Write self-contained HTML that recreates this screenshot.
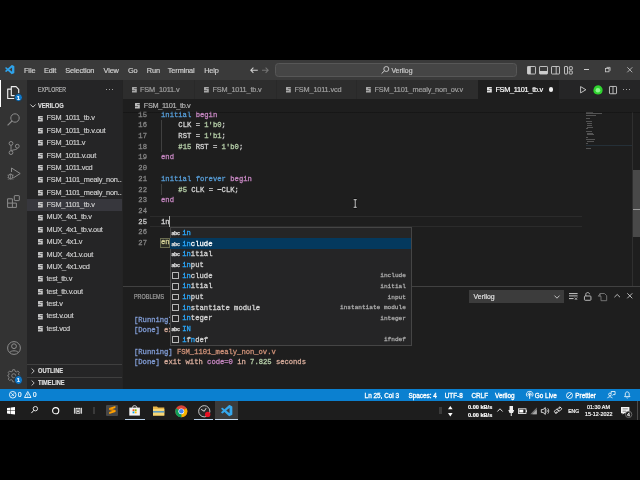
<!DOCTYPE html>
<html><head><meta charset="utf-8">
<style>
*{margin:0;padding:0;box-sizing:border-box}
html,body{width:640px;height:480px;background:#000;overflow:hidden}
body{position:relative;font-family:"Liberation Sans",sans-serif;color:#ccc}
#root{position:absolute;left:0;top:0;width:640px;height:480px;will-change:transform}
.a{position:absolute}
.t{position:absolute;white-space:pre;-webkit-text-stroke-width:0.18px}
svg{position:absolute;overflow:visible}
div[style*="Liberation Mono"]{-webkit-text-stroke-width:0.28px}
</style></head><body><div id="root">

<div class="a" style="left:0.00px;top:60.00px;width:640.00px;height:19.70px;background:#3a3a3a;"></div>
<div class="a" style="left:0.00px;top:79.70px;width:27.00px;height:309.05px;background:#333333;"></div>
<div class="a" style="left:27.00px;top:79.70px;width:95.50px;height:309.05px;background:#252526;"></div>
<div class="a" style="left:122.50px;top:79.70px;width:517.50px;height:309.05px;background:#1e1e1e;"></div>
<div class="a" style="left:122.50px;top:79.70px;width:517.50px;height:19.70px;background:#252526;"></div>
<div class="a" style="left:0.00px;top:388.75px;width:640.00px;height:12.45px;background:#0b80d0;"></div>
<div class="a" style="left:0.00px;top:401.20px;width:640.00px;height:18.80px;background:#1d1d1d;"></div>
<svg style="left:5.1px;top:64.8px" width="9.5" height="9.2" viewBox="0 0 100 100"><path d="M96.5 10.8 L75.9 0.9 A6.2 6.2 0 0 0 68.8 2.1 L29.4 38 L12.2 25 A4.2 4.2 0 0 0 6.9 25.2 L1.4 30.2 A4.2 4.2 0 0 0 1.4 36.4 L16.3 50 L1.4 63.6 A4.2 4.2 0 0 0 1.4 69.8 L6.9 74.8 A4.2 4.2 0 0 0 12.2 75 L29.4 62 L68.8 97.9 A6.2 6.2 0 0 0 75.9 99.1 L96.5 89.2 A6.2 6.2 0 0 0 100 83.6 V16.4 A6.2 6.2 0 0 0 96.5 10.8 Z M75 72.7 L45.1 50 L75 27.3 Z" fill="#2fa3ea" fill-rule="evenodd"/></svg>
<div class="t" style="left:24.00px;top:65.60px;font-size:7.35px;line-height:10px;color:#d0d0d0;font-weight:normal;letter-spacing:-0.12px;font-family:'Liberation Sans';">File</div>
<div class="t" style="left:44.10px;top:65.60px;font-size:7.35px;line-height:10px;color:#d0d0d0;font-weight:normal;letter-spacing:-0.12px;font-family:'Liberation Sans';">Edit</div>
<div class="t" style="left:65.20px;top:65.60px;font-size:7.35px;line-height:10px;color:#d0d0d0;font-weight:normal;letter-spacing:-0.12px;font-family:'Liberation Sans';">Selection</div>
<div class="t" style="left:103.50px;top:65.60px;font-size:7.35px;line-height:10px;color:#d0d0d0;font-weight:normal;letter-spacing:-0.12px;font-family:'Liberation Sans';">View</div>
<div class="t" style="left:128.00px;top:65.60px;font-size:7.35px;line-height:10px;color:#d0d0d0;font-weight:normal;letter-spacing:-0.12px;font-family:'Liberation Sans';">Go</div>
<div class="t" style="left:146.80px;top:65.60px;font-size:7.35px;line-height:10px;color:#d0d0d0;font-weight:normal;letter-spacing:-0.12px;font-family:'Liberation Sans';">Run</div>
<div class="t" style="left:167.80px;top:65.60px;font-size:7.35px;line-height:10px;color:#d0d0d0;font-weight:normal;letter-spacing:-0.12px;font-family:'Liberation Sans';">Terminal</div>
<div class="t" style="left:204.20px;top:65.60px;font-size:7.35px;line-height:10px;color:#d0d0d0;font-weight:normal;letter-spacing:-0.12px;font-family:'Liberation Sans';">Help</div>
<svg style="left:249.5px;top:66.8px" width="8" height="6.4" viewBox="0 0 8 6.4"><path d="M7.8 3.2 H0.9 M3.4 0.6 L0.8 3.2 L3.4 5.8" stroke="#d0d0d0" stroke-width="1.05" fill="none"/></svg>
<svg style="left:262.2px;top:66.8px" width="7" height="6.4" viewBox="0 0 7 6.4"><path d="M0 3.2 H6.1 M3.6 0.6 L6.2 3.2 L3.6 5.8" stroke="#737373" stroke-width="1.05" fill="none"/></svg>
<div class="a" style="left:274.80px;top:62.80px;width:242.40px;height:13.90px;background:#454545;border:0.7px solid #575757;border-radius:3.5px"></div>
<svg style="left:381px;top:65.6px" width="8.5" height="8" viewBox="0 0 8.5 8"><circle cx="5.3" cy="3" r="2.5" stroke="#cfcfcf" stroke-width="0.9" fill="none"/><path d="M3.5 4.8 L0.6 7.6" stroke="#cfcfcf" stroke-width="1"/></svg>
<div class="t" style="left:391.40px;top:65.60px;font-size:6.9px;line-height:10px;color:#cccccc;font-weight:normal;letter-spacing:0px;font-family:'Liberation Sans';">Verilog</div>
<svg style="left:526.6px;top:65.6px" width="9" height="8.5" viewBox="0 0 9 8.5"><rect x="0.5" y="0.5" width="8" height="7.5" rx="0.6" stroke="#cccccc" stroke-width="0.9" fill="none"/><rect x="0.5" y="0.5" width="3.3" height="7.5" fill="#cccccc"/></svg>
<svg style="left:538.8px;top:65.6px" width="9" height="8.5" viewBox="0 0 9 8.5"><rect x="0.5" y="0.5" width="8" height="7.5" rx="0.6" stroke="#cccccc" stroke-width="0.9" fill="none"/><rect x="0.5" y="5" width="8" height="3" fill="#cccccc"/></svg>
<svg style="left:551px;top:65.6px" width="9" height="8.5" viewBox="0 0 9 8.5"><rect x="0.5" y="0.5" width="8" height="7.5" rx="0.6" stroke="#cccccc" stroke-width="0.9" fill="none"/><path d="M5.2 0.5 V8" stroke="#cccccc" stroke-width="0.9"/></svg>
<svg style="left:564px;top:65.6px" width="9" height="8.5" viewBox="0 0 9 8.5"><rect x="0.5" y="0.5" width="3" height="7.5" rx="0.4" stroke="#cccccc" stroke-width="0.9" fill="none"/><rect x="5.3" y="0.7" width="3" height="3" rx="0.4" stroke="#cccccc" stroke-width="0.9" fill="none"/><rect x="5.3" y="5" width="3" height="3" rx="0.4" stroke="#cccccc" stroke-width="0.9" fill="none"/></svg>
<div class="a" style="left:583.80px;top:69.30px;width:5.30px;height:0.80px;background:#cccccc;"></div>
<svg style="left:604.6px;top:66.8px" width="5.5" height="5.2" viewBox="0 0 5.5 5.2"><rect x="0.4" y="1.4" width="3.6" height="3.4" stroke="#cccccc" stroke-width="0.8" fill="none"/><path d="M1.5 0.4 H5.1 V3.8" stroke="#cccccc" stroke-width="0.8" fill="none"/></svg>
<svg style="left:627px;top:66.6px" width="5.6" height="5.6" viewBox="0 0 5.6 5.6"><path d="M0.3 0.3 L5.3 5.3 M5.3 0.3 L0.3 5.3" stroke="#cccccc" stroke-width="0.8"/></svg>
<div class="a" style="left:0.00px;top:79.70px;width:1.40px;height:27.30px;background:#ffffff;"></div>
<svg style="left:7px;top:86.2px" width="12.5" height="13.2" viewBox="0 0 12.5 13.2"><path d="M4.3 0.7 H9.1 L11.7 3.3 V9.6 H4.3 Z" stroke="#ededed" stroke-width="1.15" fill="none" stroke-linejoin="round"/><path d="M4.3 3.1 H0.7 V12.5 H8.3 V9.6" stroke="#ededed" stroke-width="1.15" fill="none" stroke-linejoin="round"/></svg>
<div class="a" style="left:13.7px;top:92.9px;width:9.4px;height:9.4px;border-radius:50%;background:#0f77c8;border:0.8px solid #2c2c2c"></div>
<div class="t" style="left:16.75px;top:92.70px;font-size:6.0px;line-height:10px;color:#e8f4ff;font-weight:bold;letter-spacing:0px;font-family:'Liberation Sans';">1</div>
<svg style="left:7.2px;top:113.2px" width="13" height="13" viewBox="0 0 13 13"><circle cx="8" cy="5" r="4.2" stroke="#8c8c8c" stroke-width="1" fill="none"/><path d="M5 8 L0.6 12.4" stroke="#8c8c8c" stroke-width="1.1"/></svg>
<svg style="left:7.5px;top:140.5px" width="12" height="14" viewBox="0 0 12 14"><circle cx="3" cy="2.4" r="1.9" stroke="#8c8c8c" stroke-width="0.95" fill="none"/><circle cx="3" cy="11.6" r="1.9" stroke="#8c8c8c" stroke-width="0.95" fill="none"/><circle cx="9.3" cy="5.2" r="1.9" stroke="#8c8c8c" stroke-width="0.95" fill="none"/><path d="M3 4.3 V9.7 M9.3 7.1 C9.3 9 5 8.5 3.3 9.8" stroke="#8c8c8c" stroke-width="0.95" fill="none"/></svg>
<svg style="left:6.8px;top:167px" width="14" height="14" viewBox="0 0 14 14"><path d="M4.5 1 L13.2 6.5 L6.5 10.8" stroke="#8c8c8c" stroke-width="1" fill="none" stroke-linejoin="round"/><path d="M4.5 1 V5" stroke="#8c8c8c" stroke-width="1"/><ellipse cx="3.6" cy="9.6" rx="2.1" ry="2.6" stroke="#8c8c8c" stroke-width="0.95" fill="none"/><path d="M0.5 8.2 H1.5 M5.7 8.2 H6.7 M0.5 10.6 H1.5 M5.7 10.6 H6.7 M1.2 12.6 L1.9 11.8 M6 12.6 L5.3 11.8 M3.6 7 V12" stroke="#8c8c8c" stroke-width="0.8"/></svg>
<svg style="left:7px;top:194.5px" width="13" height="13" viewBox="0 0 13 13"><path d="M0.6 3.8 H5.4 V8.1 H9.4 V12.4 H0.6 Z M0.6 8.1 H5.4 V12.4" stroke="#8c8c8c" stroke-width="1" fill="none"/><rect x="7.3" y="0.6" width="5" height="5" rx="0.5" stroke="#8c8c8c" stroke-width="1" fill="none"/></svg>
<svg style="left:6.9px;top:341px" width="14" height="14" viewBox="0 0 14 14"><circle cx="7" cy="7" r="6.4" stroke="#8c8c8c" stroke-width="1" fill="none"/><circle cx="7" cy="5.2" r="2.4" stroke="#8c8c8c" stroke-width="1" fill="none"/><path d="M2.8 11.6 C3.5 9.2 10.5 9.2 11.2 11.6" stroke="#8c8c8c" stroke-width="1" fill="none"/></svg>
<svg style="left:6.9px;top:368.7px" width="13.5" height="13.5" viewBox="0 0 14 14"><path d="M6 0.7 H8 L8.4 2.4 L9.8 3 L11.3 2.1 L12.7 3.5 L11.8 5 L12.4 6.4 L13.3 6.8 V7.2 L12.4 7.6 L11.8 9 L12.7 10.5 L11.3 11.9 L9.8 11 L8.4 11.6 L8 13.3 H6 L5.6 11.6 L4.2 11 L2.7 11.9 L1.3 10.5 L2.2 9 L1.6 7.6 L0.7 7.2 V6.8 L1.6 6.4 L2.2 5 L1.3 3.5 L2.7 2.1 L4.2 3 L5.6 2.4 Z" stroke="#8c8c8c" stroke-width="0.9" fill="none" stroke-linejoin="round"/><circle cx="7" cy="7" r="2.1" stroke="#8c8c8c" stroke-width="0.9" fill="none"/></svg>
<div class="a" style="left:13.7px;top:375.3px;width:9.4px;height:9.4px;border-radius:50%;background:#0f77c8;border:0.8px solid #2c2c2c"></div>
<div class="t" style="left:16.75px;top:375.10px;font-size:6.0px;line-height:10px;color:#e8f4ff;font-weight:bold;letter-spacing:0px;font-family:'Liberation Sans';">1</div>
<div class="t" style="left:37.90px;top:84.60px;font-size:6.6px;line-height:10px;color:#bbbbbb;font-weight:normal;transform:scaleX(0.78);transform-origin:0 50%;">EXPLORER</div>
<div class="a" style="left:106.00px;top:89.00px;width:1.30px;height:1.30px;background:#cccccc;border-radius:50%"></div>
<div class="a" style="left:108.90px;top:89.00px;width:1.30px;height:1.30px;background:#cccccc;border-radius:50%"></div>
<div class="a" style="left:111.80px;top:89.00px;width:1.30px;height:1.30px;background:#cccccc;border-radius:50%"></div>
<svg style="left:29.6px;top:103.9px" width="6" height="3.6" viewBox="0 0 6 3.6"><path d="M0.4 0.5 L3 3.1 L5.6 0.5" stroke="#c8c8c8" stroke-width="1" fill="none"/></svg>
<div class="t" style="left:37.90px;top:100.60px;font-size:6.8px;line-height:10px;color:#dedede;font-weight:bold;transform:scaleX(0.84);transform-origin:0 50%;">VERILOG</div>
<svg style="left:38.30px;top:115.50px" width="5" height="5.6" viewBox="0 0 5 5.6"><path d="M0.3 0 H4.8 V1.5 H1.9 V2.1 H4.8 V5.6 H0 V4.1 H3.1 V3.5 H0 V0.4 Z" fill="#c5c5c5"/></svg>
<div class="t" style="left:46.50px;top:113.40px;font-size:7.35px;line-height:10px;color:#cccccc;font-weight:normal;letter-spacing:-0.24px;font-family:'Liberation Sans';">FSM_1011_tb.v</div>
<svg style="left:38.30px;top:127.88px" width="5" height="5.6" viewBox="0 0 5 5.6"><path d="M0.3 0 H4.8 V1.5 H1.9 V2.1 H4.8 V5.6 H0 V4.1 H3.1 V3.5 H0 V0.4 Z" fill="#c5c5c5"/></svg>
<div class="t" style="left:46.50px;top:125.78px;font-size:7.35px;line-height:10px;color:#cccccc;font-weight:normal;letter-spacing:-0.24px;font-family:'Liberation Sans';">FSM_1011_tb.v.out</div>
<svg style="left:38.30px;top:140.25px" width="5" height="5.6" viewBox="0 0 5 5.6"><path d="M0.3 0 H4.8 V1.5 H1.9 V2.1 H4.8 V5.6 H0 V4.1 H3.1 V3.5 H0 V0.4 Z" fill="#c5c5c5"/></svg>
<div class="t" style="left:46.50px;top:138.15px;font-size:7.35px;line-height:10px;color:#cccccc;font-weight:normal;letter-spacing:-0.24px;font-family:'Liberation Sans';">FSM_1011.v</div>
<svg style="left:38.30px;top:152.62px" width="5" height="5.6" viewBox="0 0 5 5.6"><path d="M0.3 0 H4.8 V1.5 H1.9 V2.1 H4.8 V5.6 H0 V4.1 H3.1 V3.5 H0 V0.4 Z" fill="#c5c5c5"/></svg>
<div class="t" style="left:46.50px;top:150.53px;font-size:7.35px;line-height:10px;color:#cccccc;font-weight:normal;letter-spacing:-0.24px;font-family:'Liberation Sans';">FSM_1011.v.out</div>
<svg style="left:38.30px;top:165.00px" width="5" height="5.6" viewBox="0 0 5 5.6"><path d="M0.3 0 H4.8 V1.5 H1.9 V2.1 H4.8 V5.6 H0 V4.1 H3.1 V3.5 H0 V0.4 Z" fill="#c5c5c5"/></svg>
<div class="t" style="left:46.50px;top:162.90px;font-size:7.35px;line-height:10px;color:#cccccc;font-weight:normal;letter-spacing:-0.24px;font-family:'Liberation Sans';">FSM_1011.vcd</div>
<svg style="left:38.30px;top:177.38px" width="5" height="5.6" viewBox="0 0 5 5.6"><path d="M0.3 0 H4.8 V1.5 H1.9 V2.1 H4.8 V5.6 H0 V4.1 H3.1 V3.5 H0 V0.4 Z" fill="#c5c5c5"/></svg>
<div class="t" style="left:46.50px;top:175.28px;font-size:7.35px;line-height:10px;color:#cccccc;font-weight:normal;letter-spacing:-0.24px;font-family:'Liberation Sans';">FSM_1101_mealy_non...</div>
<svg style="left:38.30px;top:189.75px" width="5" height="5.6" viewBox="0 0 5 5.6"><path d="M0.3 0 H4.8 V1.5 H1.9 V2.1 H4.8 V5.6 H0 V4.1 H3.1 V3.5 H0 V0.4 Z" fill="#c5c5c5"/></svg>
<div class="t" style="left:46.50px;top:187.65px;font-size:7.35px;line-height:10px;color:#cccccc;font-weight:normal;letter-spacing:-0.24px;font-family:'Liberation Sans';">FSM_1101_mealy_non...</div>
<div class="a" style="left:27.00px;top:198.53px;width:95.50px;height:12.40px;background:#37373d;"></div>
<svg style="left:38.30px;top:202.12px" width="5" height="5.6" viewBox="0 0 5 5.6"><path d="M0.3 0 H4.8 V1.5 H1.9 V2.1 H4.8 V5.6 H0 V4.1 H3.1 V3.5 H0 V0.4 Z" fill="#c5c5c5"/></svg>
<div class="t" style="left:46.50px;top:200.03px;font-size:7.35px;line-height:10px;color:#cccccc;font-weight:normal;letter-spacing:-0.24px;font-family:'Liberation Sans';">FSM_1101_tb.v</div>
<svg style="left:38.30px;top:214.50px" width="5" height="5.6" viewBox="0 0 5 5.6"><path d="M0.3 0 H4.8 V1.5 H1.9 V2.1 H4.8 V5.6 H0 V4.1 H3.1 V3.5 H0 V0.4 Z" fill="#c5c5c5"/></svg>
<div class="t" style="left:46.50px;top:212.40px;font-size:7.35px;line-height:10px;color:#cccccc;font-weight:normal;letter-spacing:-0.24px;font-family:'Liberation Sans';">MUX_4x1_tb.v</div>
<svg style="left:38.30px;top:226.88px" width="5" height="5.6" viewBox="0 0 5 5.6"><path d="M0.3 0 H4.8 V1.5 H1.9 V2.1 H4.8 V5.6 H0 V4.1 H3.1 V3.5 H0 V0.4 Z" fill="#c5c5c5"/></svg>
<div class="t" style="left:46.50px;top:224.78px;font-size:7.35px;line-height:10px;color:#cccccc;font-weight:normal;letter-spacing:-0.24px;font-family:'Liberation Sans';">MUX_4x1_tb.v.out</div>
<svg style="left:38.30px;top:239.25px" width="5" height="5.6" viewBox="0 0 5 5.6"><path d="M0.3 0 H4.8 V1.5 H1.9 V2.1 H4.8 V5.6 H0 V4.1 H3.1 V3.5 H0 V0.4 Z" fill="#c5c5c5"/></svg>
<div class="t" style="left:46.50px;top:237.15px;font-size:7.35px;line-height:10px;color:#cccccc;font-weight:normal;letter-spacing:-0.24px;font-family:'Liberation Sans';">MUX_4x1.v</div>
<svg style="left:38.30px;top:251.62px" width="5" height="5.6" viewBox="0 0 5 5.6"><path d="M0.3 0 H4.8 V1.5 H1.9 V2.1 H4.8 V5.6 H0 V4.1 H3.1 V3.5 H0 V0.4 Z" fill="#c5c5c5"/></svg>
<div class="t" style="left:46.50px;top:249.53px;font-size:7.35px;line-height:10px;color:#cccccc;font-weight:normal;letter-spacing:-0.24px;font-family:'Liberation Sans';">MUX_4x1.v.out</div>
<svg style="left:38.30px;top:264.00px" width="5" height="5.6" viewBox="0 0 5 5.6"><path d="M0.3 0 H4.8 V1.5 H1.9 V2.1 H4.8 V5.6 H0 V4.1 H3.1 V3.5 H0 V0.4 Z" fill="#c5c5c5"/></svg>
<div class="t" style="left:46.50px;top:261.90px;font-size:7.35px;line-height:10px;color:#cccccc;font-weight:normal;letter-spacing:-0.24px;font-family:'Liberation Sans';">MUX_4x1.vcd</div>
<svg style="left:38.30px;top:276.38px" width="5" height="5.6" viewBox="0 0 5 5.6"><path d="M0.3 0 H4.8 V1.5 H1.9 V2.1 H4.8 V5.6 H0 V4.1 H3.1 V3.5 H0 V0.4 Z" fill="#c5c5c5"/></svg>
<div class="t" style="left:46.50px;top:274.28px;font-size:7.35px;line-height:10px;color:#cccccc;font-weight:normal;letter-spacing:-0.24px;font-family:'Liberation Sans';">test_tb.v</div>
<svg style="left:38.30px;top:288.75px" width="5" height="5.6" viewBox="0 0 5 5.6"><path d="M0.3 0 H4.8 V1.5 H1.9 V2.1 H4.8 V5.6 H0 V4.1 H3.1 V3.5 H0 V0.4 Z" fill="#c5c5c5"/></svg>
<div class="t" style="left:46.50px;top:286.65px;font-size:7.35px;line-height:10px;color:#cccccc;font-weight:normal;letter-spacing:-0.24px;font-family:'Liberation Sans';">test_tb.v.out</div>
<svg style="left:38.30px;top:301.12px" width="5" height="5.6" viewBox="0 0 5 5.6"><path d="M0.3 0 H4.8 V1.5 H1.9 V2.1 H4.8 V5.6 H0 V4.1 H3.1 V3.5 H0 V0.4 Z" fill="#c5c5c5"/></svg>
<div class="t" style="left:46.50px;top:299.03px;font-size:7.35px;line-height:10px;color:#cccccc;font-weight:normal;letter-spacing:-0.24px;font-family:'Liberation Sans';">test.v</div>
<svg style="left:38.30px;top:313.50px" width="5" height="5.6" viewBox="0 0 5 5.6"><path d="M0.3 0 H4.8 V1.5 H1.9 V2.1 H4.8 V5.6 H0 V4.1 H3.1 V3.5 H0 V0.4 Z" fill="#c5c5c5"/></svg>
<div class="t" style="left:46.50px;top:311.40px;font-size:7.35px;line-height:10px;color:#cccccc;font-weight:normal;letter-spacing:-0.24px;font-family:'Liberation Sans';">test.v.out</div>
<svg style="left:38.30px;top:325.88px" width="5" height="5.6" viewBox="0 0 5 5.6"><path d="M0.3 0 H4.8 V1.5 H1.9 V2.1 H4.8 V5.6 H0 V4.1 H3.1 V3.5 H0 V0.4 Z" fill="#c5c5c5"/></svg>
<div class="t" style="left:46.50px;top:323.78px;font-size:7.35px;line-height:10px;color:#cccccc;font-weight:normal;letter-spacing:-0.24px;font-family:'Liberation Sans';">test.vcd</div>
<div class="a" style="left:27.00px;top:364.30px;width:95.50px;height:0.70px;background:#3f3f3f;"></div>
<div class="a" style="left:27.00px;top:377.00px;width:95.50px;height:0.70px;background:#3f3f3f;"></div>
<svg style="left:30.5px;top:368.00px" width="4" height="6" viewBox="0 0 4 6"><path d="M0.6 0.5 L3.2 3 L0.6 5.5" stroke="#cccccc" stroke-width="0.9" fill="none"/></svg>
<div class="t" style="left:37.90px;top:365.80px;font-size:6.8px;line-height:10px;color:#dedede;font-weight:bold;transform:scaleX(0.84);transform-origin:0 50%;">OUTLINE</div>
<svg style="left:30.5px;top:380.20px" width="4" height="6" viewBox="0 0 4 6"><path d="M0.6 0.5 L3.2 3 L0.6 5.5" stroke="#cccccc" stroke-width="0.9" fill="none"/></svg>
<div class="t" style="left:37.90px;top:378.00px;font-size:6.8px;line-height:10px;color:#dedede;font-weight:bold;transform:scaleX(0.84);transform-origin:0 50%;">TIMELINE</div>
<div class="a" style="left:122.20px;top:79.70px;width:0.60px;height:309.05px;background:#242424;"></div>
<div class="a" style="left:122.50px;top:79.70px;width:72.00px;height:19.70px;background:#2d2d2d;"></div>
<svg style="left:131.80px;top:86.60px" width="5" height="5.6" viewBox="0 0 5 5.6"><path d="M0.3 0 H4.8 V1.5 H1.9 V2.1 H4.8 V5.6 H0 V4.1 H3.1 V3.5 H0 V0.4 Z" fill="#a8a8a8"/></svg>
<div class="t" style="left:140.00px;top:84.90px;font-size:7.35px;line-height:10px;color:#a0a0a0;font-weight:normal;letter-spacing:-0.17px;font-family:'Liberation Sans';">FSM_1011.v</div>
<div class="a" style="left:195.00px;top:79.70px;width:81.50px;height:19.70px;background:#2d2d2d;"></div>
<svg style="left:204.30px;top:86.60px" width="5" height="5.6" viewBox="0 0 5 5.6"><path d="M0.3 0 H4.8 V1.5 H1.9 V2.1 H4.8 V5.6 H0 V4.1 H3.1 V3.5 H0 V0.4 Z" fill="#a8a8a8"/></svg>
<div class="t" style="left:212.50px;top:84.90px;font-size:7.35px;line-height:10px;color:#a0a0a0;font-weight:normal;letter-spacing:-0.17px;font-family:'Liberation Sans';">FSM_1011_tb.v</div>
<div class="a" style="left:277.00px;top:79.70px;width:79.50px;height:19.70px;background:#2d2d2d;"></div>
<svg style="left:286.30px;top:86.60px" width="5" height="5.6" viewBox="0 0 5 5.6"><path d="M0.3 0 H4.8 V1.5 H1.9 V2.1 H4.8 V5.6 H0 V4.1 H3.1 V3.5 H0 V0.4 Z" fill="#a8a8a8"/></svg>
<div class="t" style="left:294.50px;top:84.90px;font-size:7.35px;line-height:10px;color:#a0a0a0;font-weight:normal;letter-spacing:-0.17px;font-family:'Liberation Sans';">FSM_1011.vcd</div>
<div class="a" style="left:357.00px;top:79.70px;width:121.50px;height:19.70px;background:#2d2d2d;"></div>
<svg style="left:366.30px;top:86.60px" width="5" height="5.6" viewBox="0 0 5 5.6"><path d="M0.3 0 H4.8 V1.5 H1.9 V2.1 H4.8 V5.6 H0 V4.1 H3.1 V3.5 H0 V0.4 Z" fill="#a8a8a8"/></svg>
<div class="t" style="left:374.50px;top:84.90px;font-size:7.35px;line-height:10px;color:#a0a0a0;font-weight:normal;letter-spacing:-0.17px;font-family:'Liberation Sans';">FSM_1101_mealy_non_ov.v</div>
<div class="a" style="left:478.00px;top:79.70px;width:80.80px;height:19.90px;background:#1e1e1e;"></div>
<div class="a" style="left:194.40px;top:79.70px;width:0.60px;height:19.70px;background:#292929;"></div>
<div class="a" style="left:276.40px;top:79.70px;width:0.60px;height:19.70px;background:#292929;"></div>
<div class="a" style="left:356.40px;top:79.70px;width:0.60px;height:19.70px;background:#292929;"></div>
<svg style="left:486.90px;top:86.60px" width="5" height="5.6" viewBox="0 0 5 5.6"><path d="M0.3 0 H4.8 V1.5 H1.9 V2.1 H4.8 V5.6 H0 V4.1 H3.1 V3.5 H0 V0.4 Z" fill="#e0e0e0"/></svg>
<div class="t" style="left:495.40px;top:84.70px;font-size:7.35px;line-height:10px;color:#ffffff;font-weight:normal;letter-spacing:-0.3px;font-family:'Liberation Sans';">FSM_1101_tb.v</div>
<div class="a" style="left:548.6px;top:87.0px;width:4.9px;height:4.9px;border-radius:50%;background:#eeeeee"></div>
<svg style="left:580px;top:86px" width="6.5" height="7.5" viewBox="0 0 6.5 7.5"><path d="M0.6 0.6 L5.9 3.75 L0.6 6.9 Z" stroke="#cccccc" stroke-width="0.9" fill="none" stroke-linejoin="round"/></svg>
<svg style="left:592.8px;top:84.8px" width="10" height="9.8" viewBox="0 0 10 9.8"><path d="M5.3 0.2 C7 0.2 8.2 1.2 9.3 3.2 C10 5 9.6 7.4 8 8.8 C6.6 9.8 3.6 9.9 2 8.8 C0.4 7.6 0 5.4 0.8 3.4 C1.6 1.4 3.4 0.2 5.3 0.2 Z" fill="#2fd32f"/><circle cx="4.9" cy="5.2" r="2.3" fill="#8ef58e"/></svg>
<svg style="left:608.7px;top:85.6px" width="8" height="8.2" viewBox="0 0 8 8.2"><rect x="0.45" y="0.45" width="7.1" height="7.3" rx="0.6" stroke="#cccccc" stroke-width="0.9" fill="none"/><path d="M4 0.45 V7.7" stroke="#cccccc" stroke-width="0.9"/></svg>
<div class="a" style="left:623.00px;top:89.20px;width:1.30px;height:1.30px;background:#cccccc;border-radius:50%"></div>
<div class="a" style="left:625.90px;top:89.20px;width:1.30px;height:1.30px;background:#cccccc;border-radius:50%"></div>
<div class="a" style="left:628.80px;top:89.20px;width:1.30px;height:1.30px;background:#cccccc;border-radius:50%"></div>
<svg style="left:135.40px;top:103.00px" width="5" height="5.6" viewBox="0 0 5 5.6"><path d="M0.3 0 H4.8 V1.5 H1.9 V2.1 H4.8 V5.6 H0 V4.1 H3.1 V3.5 H0 V0.4 Z" fill="#bdbdbd"/></svg>
<div class="t" style="left:143.80px;top:101.10px;font-size:7.35px;line-height:10px;color:#b4b4b4;font-weight:normal;letter-spacing:-0.36px;font-family:'Liberation Sans';">FSM_1101_tb.v</div>
<div class="a" style="left:122.5px;top:110.4px;width:517.5px;height:175.9px;overflow:hidden">
<div class="a" style="left:27.50px;top:105.60px;width:431.50px;height:10.688px;border-top:0.6px solid #2b2b2b;border-bottom:0.6px solid #2b2b2b"></div>
<div class="t" style="left:-12.50px;width:37.00px;text-align:right;top:-11.36px;height:10.6875px;line-height:10.6875px;font-family:'Liberation Mono';font-size:7.2px;color:#858585">14</div>
<div class="t" style="left:-12.50px;width:37.00px;text-align:right;top:-0.68px;height:10.6875px;line-height:10.6875px;font-family:'Liberation Mono';font-size:7.2px;color:#858585">15</div>
<div class="t" style="left:38.50px;top:-0.68px;line-height:10.6875px;font-family:'Liberation Mono';font-size:7.2px;color:#569cd6;letter-spacing:0.010px">initial</div>
<div class="t" style="left:73.14px;top:-0.68px;line-height:10.6875px;font-family:'Liberation Mono';font-size:7.2px;color:#c586c0;letter-spacing:0.010px">begin</div>
<div class="t" style="left:-12.50px;width:37.00px;text-align:right;top:10.01px;height:10.6875px;line-height:10.6875px;font-family:'Liberation Mono';font-size:7.2px;color:#858585">16</div>
<div class="t" style="left:55.82px;top:10.01px;line-height:10.6875px;font-family:'Liberation Mono';font-size:7.2px;color:#d4d4d4;letter-spacing:0.010px">CLK</div>
<div class="t" style="left:73.14px;top:10.01px;line-height:10.6875px;font-family:'Liberation Mono';font-size:7.2px;color:#d4d4d4;letter-spacing:0.010px">=</div>
<div class="t" style="left:81.80px;top:10.01px;line-height:10.6875px;font-family:'Liberation Mono';font-size:7.2px;color:#b5cea8;letter-spacing:0.010px">1'b0</div>
<div class="t" style="left:99.12px;top:10.01px;line-height:10.6875px;font-family:'Liberation Mono';font-size:7.2px;color:#d4d4d4;letter-spacing:0.010px">;</div>
<div class="t" style="left:-12.50px;width:37.00px;text-align:right;top:20.70px;height:10.6875px;line-height:10.6875px;font-family:'Liberation Mono';font-size:7.2px;color:#858585">17</div>
<div class="t" style="left:55.82px;top:20.70px;line-height:10.6875px;font-family:'Liberation Mono';font-size:7.2px;color:#d4d4d4;letter-spacing:0.010px">RST</div>
<div class="t" style="left:73.14px;top:20.70px;line-height:10.6875px;font-family:'Liberation Mono';font-size:7.2px;color:#d4d4d4;letter-spacing:0.010px">=</div>
<div class="t" style="left:81.80px;top:20.70px;line-height:10.6875px;font-family:'Liberation Mono';font-size:7.2px;color:#b5cea8;letter-spacing:0.010px">1'b1</div>
<div class="t" style="left:99.12px;top:20.70px;line-height:10.6875px;font-family:'Liberation Mono';font-size:7.2px;color:#d4d4d4;letter-spacing:0.010px">;</div>
<div class="t" style="left:-12.50px;width:37.00px;text-align:right;top:31.39px;height:10.6875px;line-height:10.6875px;font-family:'Liberation Mono';font-size:7.2px;color:#858585">18</div>
<div class="t" style="left:55.82px;top:31.39px;line-height:10.6875px;font-family:'Liberation Mono';font-size:7.2px;color:#b5cea8;letter-spacing:0.010px">#15</div>
<div class="t" style="left:73.14px;top:31.39px;line-height:10.6875px;font-family:'Liberation Mono';font-size:7.2px;color:#d4d4d4;letter-spacing:0.010px">RST</div>
<div class="t" style="left:90.46px;top:31.39px;line-height:10.6875px;font-family:'Liberation Mono';font-size:7.2px;color:#d4d4d4;letter-spacing:0.010px">=</div>
<div class="t" style="left:99.12px;top:31.39px;line-height:10.6875px;font-family:'Liberation Mono';font-size:7.2px;color:#b5cea8;letter-spacing:0.010px">1'b0</div>
<div class="t" style="left:116.44px;top:31.39px;line-height:10.6875px;font-family:'Liberation Mono';font-size:7.2px;color:#d4d4d4;letter-spacing:0.010px">;</div>
<div class="t" style="left:-12.50px;width:37.00px;text-align:right;top:42.07px;height:10.6875px;line-height:10.6875px;font-family:'Liberation Mono';font-size:7.2px;color:#858585">19</div>
<div class="t" style="left:38.50px;top:42.07px;line-height:10.6875px;font-family:'Liberation Mono';font-size:7.2px;color:#c586c0;letter-spacing:0.010px">end</div>
<div class="t" style="left:-12.50px;width:37.00px;text-align:right;top:52.76px;height:10.6875px;line-height:10.6875px;font-family:'Liberation Mono';font-size:7.2px;color:#858585">20</div>
<div class="t" style="left:-12.50px;width:37.00px;text-align:right;top:63.45px;height:10.6875px;line-height:10.6875px;font-family:'Liberation Mono';font-size:7.2px;color:#858585">21</div>
<div class="t" style="left:38.50px;top:63.45px;line-height:10.6875px;font-family:'Liberation Mono';font-size:7.2px;color:#569cd6;letter-spacing:0.010px">initial</div>
<div class="t" style="left:73.14px;top:63.45px;line-height:10.6875px;font-family:'Liberation Mono';font-size:7.2px;color:#569cd6;letter-spacing:0.010px">forever</div>
<div class="t" style="left:107.78px;top:63.45px;line-height:10.6875px;font-family:'Liberation Mono';font-size:7.2px;color:#c586c0;letter-spacing:0.010px">begin</div>
<div class="t" style="left:-12.50px;width:37.00px;text-align:right;top:74.14px;height:10.6875px;line-height:10.6875px;font-family:'Liberation Mono';font-size:7.2px;color:#858585">22</div>
<div class="t" style="left:55.82px;top:74.14px;line-height:10.6875px;font-family:'Liberation Mono';font-size:7.2px;color:#b5cea8;letter-spacing:0.010px">#5</div>
<div class="t" style="left:68.81px;top:74.14px;line-height:10.6875px;font-family:'Liberation Mono';font-size:7.2px;color:#d4d4d4;letter-spacing:0.010px">CLK</div>
<div class="t" style="left:86.13px;top:74.14px;line-height:10.6875px;font-family:'Liberation Mono';font-size:7.2px;color:#d4d4d4;letter-spacing:0.010px">=</div>
<div class="t" style="left:94.79px;top:74.14px;line-height:10.6875px;font-family:'Liberation Mono';font-size:7.2px;color:#d4d4d4;letter-spacing:0.010px">~CLK</div>
<div class="t" style="left:112.11px;top:74.14px;line-height:10.6875px;font-family:'Liberation Mono';font-size:7.2px;color:#d4d4d4;letter-spacing:0.010px">;</div>
<div class="t" style="left:-12.50px;width:37.00px;text-align:right;top:84.82px;height:10.6875px;line-height:10.6875px;font-family:'Liberation Mono';font-size:7.2px;color:#858585">23</div>
<div class="t" style="left:38.50px;top:84.82px;line-height:10.6875px;font-family:'Liberation Mono';font-size:7.2px;color:#c586c0;letter-spacing:0.010px">end</div>
<div class="t" style="left:-12.50px;width:37.00px;text-align:right;top:95.51px;height:10.6875px;line-height:10.6875px;font-family:'Liberation Mono';font-size:7.2px;color:#858585">24</div>
<div class="t" style="left:-12.50px;width:37.00px;text-align:right;top:106.20px;height:10.6875px;line-height:10.6875px;font-family:'Liberation Mono';font-size:7.2px;color:#c6c6c6">25</div>
<div class="t" style="left:38.50px;top:106.20px;line-height:10.6875px;font-family:'Liberation Mono';font-size:7.2px;color:#d4d4d4;letter-spacing:0.010px">in</div>
<div class="t" style="left:-12.50px;width:37.00px;text-align:right;top:116.89px;height:10.6875px;line-height:10.6875px;font-family:'Liberation Mono';font-size:7.2px;color:#858585">26</div>
<div class="t" style="left:-12.50px;width:37.00px;text-align:right;top:127.57px;height:10.6875px;line-height:10.6875px;font-family:'Liberation Mono';font-size:7.2px;color:#858585">27</div>
<div class="t" style="left:38.50px;top:127.57px;line-height:10.6875px;font-family:'Liberation Mono';font-size:7.2px;color:#d4d4d4;letter-spacing:0.010px">en</div>
<div class="a" style="left:38.80px;top:9.41px;width:0.7px;height:32.06px;background:#404040"></div>
<div class="a" style="left:38.80px;top:73.54px;width:0.7px;height:10.69px;background:#404040"></div>
<div class="a" style="left:37.70px;top:127.17px;width:10px;height:10.09px;border:0.8px solid #6a6c50;background:#2a2c24"></div>
<div class="t" style="left:38.50px;top:126.97px;line-height:10.6875px;font-family:'Liberation Mono';font-size:7.2px;color:#d7d49a;letter-spacing:0.010px">en</div>
<div class="a" style="left:46.90px;top:105.60px;width:0.9px;height:10.69px;background:#aeafad"></div>
</div>
<div class="a" style="left:585.60px;top:144.50px;width:46.80px;height:1.50px;background:#253038;"></div>
<div class="a" style="left:585.70px;top:111.80px;width:7.80px;height:1.00px;background:rgba(200,200,200,0.32);"></div>
<div class="a" style="left:585.70px;top:112.90px;width:16.20px;height:1.00px;background:rgba(200,200,200,0.32);"></div>
<div class="a" style="left:585.70px;top:115.30px;width:9.90px;height:1.00px;background:rgba(200,200,200,0.32);"></div>
<div class="a" style="left:585.70px;top:117.50px;width:4.20px;height:1.00px;background:rgba(200,200,200,0.32);"></div>
<div class="a" style="left:585.70px;top:121.20px;width:6.30px;height:1.00px;background:rgba(200,200,200,0.32);"></div>
<div class="a" style="left:587.30px;top:123.40px;width:5.20px;height:1.00px;background:rgba(200,200,200,0.32);"></div>
<div class="a" style="left:587.30px;top:125.00px;width:4.70px;height:1.00px;background:rgba(200,200,200,0.32);"></div>
<div class="a" style="left:587.30px;top:126.60px;width:5.90px;height:1.00px;background:rgba(200,200,200,0.32);"></div>
<div class="a" style="left:585.70px;top:128.40px;width:1.90px;height:1.00px;background:rgba(200,200,200,0.32);"></div>
<div class="a" style="left:585.70px;top:131.00px;width:6.30px;height:1.00px;background:rgba(200,200,200,0.32);"></div>
<div class="a" style="left:587.30px;top:132.90px;width:5.70px;height:1.00px;background:rgba(200,200,200,0.32);"></div>
<div class="a" style="left:587.30px;top:134.40px;width:6.70px;height:1.00px;background:rgba(200,200,200,0.32);"></div>
<div class="a" style="left:585.70px;top:137.10px;width:1.90px;height:1.00px;background:rgba(200,200,200,0.32);"></div>
<div class="a" style="left:585.70px;top:139.40px;width:8.90px;height:1.00px;background:rgba(200,200,200,0.32);"></div>
<div class="a" style="left:587.30px;top:141.20px;width:6.70px;height:1.00px;background:rgba(200,200,200,0.32);"></div>
<div class="a" style="left:585.70px;top:142.90px;width:1.90px;height:1.00px;background:rgba(200,200,200,0.32);"></div>
<div class="a" style="left:585.70px;top:147.90px;width:5.20px;height:1.00px;background:rgba(200,200,200,0.32);"></div>
<div class="a" style="left:632.40px;top:111.80px;width:0.70px;height:174.50px;background:#2f2f2f;"></div>
<div class="a" style="left:632.90px;top:170.20px;width:7.10px;height:67.10px;background:#494949;"></div>
<div class="a" style="left:632.90px;top:209.40px;width:7.10px;height:1.10px;background:#9a9a9a;"></div>
<div class="a" style="left:122.50px;top:111.70px;width:517.50px;height:1.60px;background:linear-gradient(rgba(0,0,0,0.5),rgba(0,0,0,0));"></div>
<svg style="left:352.8px;top:198.6px" width="4.4" height="9" viewBox="0 0 4.4 9"><path d="M0.4 0.5 H4 M2.2 0.5 V8.5 M0.4 8.5 H4" stroke="#000000" stroke-width="1.8"/><path d="M0.6 0.7 H3.8 M2.2 0.7 V8.3 M0.6 8.3 H3.8" stroke="#e8e8e8" stroke-width="0.9"/></svg>
<div class="a" style="left:122.50px;top:286.00px;width:517.50px;height:0.70px;background:#414141;"></div>
<div class="t" style="left:133.80px;top:291.60px;font-size:6.4px;line-height:10px;color:#a0a0a0;font-weight:normal;transform:scaleX(0.85);transform-origin:0 50%;">PROBLEMS</div>
<div class="a" style="left:468.80px;top:290.30px;width:95.40px;height:13.00px;background:#3c3c3c;"></div>
<div class="t" style="left:473.60px;top:291.80px;font-size:6.9px;line-height:10px;color:#e0e0e0;font-weight:normal;letter-spacing:0px;font-family:'Liberation Sans';">Verilog</div>
<svg style="left:553.7px;top:295px" width="6" height="4" viewBox="0 0 6 4"><path d="M0.5 0.6 L3 3.2 L5.5 0.6" stroke="#cccccc" stroke-width="0.9" fill="none"/></svg>
<svg style="left:568.7px;top:293px" width="8.6" height="7" viewBox="0 0 8.6 7"><path d="M0 0.6 H8.6 M0 2.9 H8.6 M0 5.6 H4.6" stroke="#c8c8c8" stroke-width="1"/><path d="M5.8 4.5 L8.2 6.9 M8.2 4.5 L5.8 6.9" stroke="#c8c8c8" stroke-width="0.8"/></svg>
<svg style="left:584px;top:292px" width="7.4" height="8.8" viewBox="0 0 7.4 8.8"><path d="M1.8 4 V2.4 C1.8 0 5.4 0 5.6 2.2" stroke="#c8c8c8" stroke-width="0.9" fill="none"/><rect x="0.45" y="4" width="6.5" height="4.3" rx="0.8" stroke="#c8c8c8" stroke-width="0.9" fill="none"/></svg>
<svg style="left:598px;top:292.6px" width="9.2" height="8.2" viewBox="0 0 9.2 8.2"><path d="M2.2 0.5 H6.5 L8.7 2.7 V7.7 H3 V3.2 H0.5 Z" stroke="#7a7a7a" stroke-width="0.9" fill="none" stroke-linejoin="round"/><path d="M0.5 3.2 L2.2 0.5 V3.2" stroke="#7a7a7a" stroke-width="0.8" fill="none"/></svg>
<svg style="left:613.8px;top:293.8px" width="6.4" height="3.6" viewBox="0 0 6.4 3.6"><path d="M0.4 3.2 L3.2 0.5 L6 3.2" stroke="#c8c8c8" stroke-width="0.9" fill="none"/></svg>
<svg style="left:626.6px;top:293.3px" width="5.6" height="5.6" viewBox="0 0 5.6 5.6"><path d="M0.3 0.3 L5.3 5.3 M5.3 0.3 L0.3 5.3" stroke="#c8c8c8" stroke-width="0.9"/></svg>
<div class="t" style="left:134.00px;top:314.60px;line-height:10px;font-family:'Liberation Mono';font-size:7.2px;color:#819dd6;letter-spacing:-0.020px">[Running]</div>
<div class="t" style="left:172.70px;top:314.60px;line-height:10px;font-family:'Liberation Mono';font-size:7.2px;color:#ce9178;letter-spacing:-0.020px"> FSM_1101_mealy_non_ov.v</div>
<div class="t" style="left:134.00px;top:325.30px;line-height:10px;font-family:'Liberation Mono';font-size:7.2px;color:#819dd6;letter-spacing:-0.020px">[Done]</div>
<div class="t" style="left:159.80px;top:325.30px;line-height:10px;font-family:'Liberation Mono';font-size:7.2px;color:#d6ab9a;letter-spacing:-0.020px"> exit with </div>
<div class="t" style="left:207.10px;top:325.30px;line-height:10px;font-family:'Liberation Mono';font-size:7.2px;color:#c586c0;letter-spacing:-0.020px">code=0</div>
<div class="t" style="left:232.90px;top:325.30px;line-height:10px;font-family:'Liberation Mono';font-size:7.2px;color:#d6ab9a;letter-spacing:-0.020px"> in </div>
<div class="t" style="left:250.10px;top:325.30px;line-height:10px;font-family:'Liberation Mono';font-size:7.2px;color:#b5cea8;letter-spacing:-0.020px">7.825</div>
<div class="t" style="left:271.60px;top:325.30px;line-height:10px;font-family:'Liberation Mono';font-size:7.2px;color:#d6ab9a;letter-spacing:-0.020px"> seconds</div>
<div class="t" style="left:134.00px;top:346.50px;line-height:10px;font-family:'Liberation Mono';font-size:7.2px;color:#819dd6;letter-spacing:-0.020px">[Running]</div>
<div class="t" style="left:172.70px;top:346.50px;line-height:10px;font-family:'Liberation Mono';font-size:7.2px;color:#ce9178;letter-spacing:-0.020px"> FSM_1101_mealy_non_ov.v</div>
<div class="t" style="left:134.00px;top:357.20px;line-height:10px;font-family:'Liberation Mono';font-size:7.2px;color:#819dd6;letter-spacing:-0.020px">[Done]</div>
<div class="t" style="left:159.80px;top:357.20px;line-height:10px;font-family:'Liberation Mono';font-size:7.2px;color:#d6ab9a;letter-spacing:-0.020px"> exit with </div>
<div class="t" style="left:207.10px;top:357.20px;line-height:10px;font-family:'Liberation Mono';font-size:7.2px;color:#c586c0;letter-spacing:-0.020px">code=0</div>
<div class="t" style="left:232.90px;top:357.20px;line-height:10px;font-family:'Liberation Mono';font-size:7.2px;color:#d6ab9a;letter-spacing:-0.020px"> in </div>
<div class="t" style="left:250.10px;top:357.20px;line-height:10px;font-family:'Liberation Mono';font-size:7.2px;color:#b5cea8;letter-spacing:-0.020px">7.825</div>
<div class="t" style="left:271.60px;top:357.20px;line-height:10px;font-family:'Liberation Mono';font-size:7.2px;color:#d6ab9a;letter-spacing:-0.020px"> seconds</div>
<div class="a" style="left:169.50px;top:227.20px;width:242.50px;height:119.00px;background:#252526;border:0.7px solid #454545"></div>
<div class="t" style="left:171.4px;top:227.84px;line-height:10px;font-size:5.3px;font-weight:bold;color:#dcdcdc;letter-spacing:-0.3px;-webkit-text-stroke-width:0.25px">abc</div>
<div class="t" style="left:182.20px;top:227.84px;line-height:10px;font-family:'Liberation Mono';font-size:7.2px;color:#2aaaff;letter-spacing:0.010px">in</div>
<div class="a" style="left:170.20px;top:238.49px;width:241.10px;height:10.69px;background:#04395e;"></div>
<div class="t" style="left:171.4px;top:238.53px;line-height:10px;font-size:5.3px;font-weight:bold;color:#dcdcdc;letter-spacing:-0.3px;-webkit-text-stroke-width:0.25px">abc</div>
<div class="t" style="left:182.20px;top:238.53px;line-height:10px;font-family:'Liberation Mono';font-size:7.2px;color:#2aaaff;letter-spacing:0.010px">in</div>
<div class="t" style="left:190.86px;top:238.53px;line-height:10px;font-family:'Liberation Mono';font-size:7.2px;color:#ffffff;letter-spacing:0.010px">clude</div>
<div class="t" style="left:171.4px;top:249.22px;line-height:10px;font-size:5.3px;font-weight:bold;color:#dcdcdc;letter-spacing:-0.3px;-webkit-text-stroke-width:0.25px">abc</div>
<div class="t" style="left:182.20px;top:249.22px;line-height:10px;font-family:'Liberation Mono';font-size:7.2px;color:#2aaaff;letter-spacing:0.010px">in</div>
<div class="t" style="left:190.86px;top:249.22px;line-height:10px;font-family:'Liberation Mono';font-size:7.2px;color:#d4d4d4;letter-spacing:0.010px">itial</div>
<div class="t" style="left:171.4px;top:259.91px;line-height:10px;font-size:5.3px;font-weight:bold;color:#dcdcdc;letter-spacing:-0.3px;-webkit-text-stroke-width:0.25px">abc</div>
<div class="t" style="left:182.20px;top:259.91px;line-height:10px;font-family:'Liberation Mono';font-size:7.2px;color:#2aaaff;letter-spacing:0.010px">in</div>
<div class="t" style="left:190.86px;top:259.91px;line-height:10px;font-family:'Liberation Mono';font-size:7.2px;color:#d4d4d4;letter-spacing:0.010px">put</div>
<div class="a" style="left:172.0px;top:272.29px;width:6.8px;height:6.8px;border:0.9px solid #b8b8b8;border-radius:0.5px"></div>
<div class="t" style="left:182.20px;top:270.59px;line-height:10px;font-family:'Liberation Mono';font-size:7.2px;color:#2aaaff;letter-spacing:0.010px">in</div>
<div class="t" style="left:190.86px;top:270.59px;line-height:10px;font-family:'Liberation Mono';font-size:7.2px;color:#d4d4d4;letter-spacing:0.010px">clude</div>
<div class="t" style="left:380.28px;top:271.19px;line-height:10px;font-family:'Liberation Mono';font-size:6.1px;color:#a8a8a8;letter-spacing:0.000px">include</div>
<div class="a" style="left:172.0px;top:282.98px;width:6.8px;height:6.8px;border:0.9px solid #b8b8b8;border-radius:0.5px"></div>
<div class="t" style="left:182.20px;top:281.28px;line-height:10px;font-family:'Liberation Mono';font-size:7.2px;color:#2aaaff;letter-spacing:0.010px">in</div>
<div class="t" style="left:190.86px;top:281.28px;line-height:10px;font-family:'Liberation Mono';font-size:7.2px;color:#d4d4d4;letter-spacing:0.010px">itial</div>
<div class="t" style="left:380.28px;top:281.88px;line-height:10px;font-family:'Liberation Mono';font-size:6.1px;color:#a8a8a8;letter-spacing:0.000px">initial</div>
<div class="a" style="left:172.0px;top:293.67px;width:6.8px;height:6.8px;border:0.9px solid #b8b8b8;border-radius:0.5px"></div>
<div class="t" style="left:182.20px;top:291.97px;line-height:10px;font-family:'Liberation Mono';font-size:7.2px;color:#2aaaff;letter-spacing:0.010px">in</div>
<div class="t" style="left:190.86px;top:291.97px;line-height:10px;font-family:'Liberation Mono';font-size:7.2px;color:#d4d4d4;letter-spacing:0.010px">put</div>
<div class="t" style="left:387.60px;top:292.57px;line-height:10px;font-family:'Liberation Mono';font-size:6.1px;color:#a8a8a8;letter-spacing:0.000px">input</div>
<div class="a" style="left:172.0px;top:304.36px;width:6.8px;height:6.8px;border:0.9px solid #b8b8b8;border-radius:0.5px"></div>
<div class="t" style="left:182.20px;top:302.66px;line-height:10px;font-family:'Liberation Mono';font-size:7.2px;color:#2aaaff;letter-spacing:0.010px">in</div>
<div class="t" style="left:190.86px;top:302.66px;line-height:10px;font-family:'Liberation Mono';font-size:7.2px;color:#d4d4d4;letter-spacing:0.010px">stantiate module</div>
<div class="t" style="left:340.02px;top:303.26px;line-height:10px;font-family:'Liberation Mono';font-size:6.1px;color:#a8a8a8;letter-spacing:0.000px">instantiate module</div>
<div class="a" style="left:172.0px;top:315.04px;width:6.8px;height:6.8px;border:0.9px solid #b8b8b8;border-radius:0.5px"></div>
<div class="t" style="left:182.20px;top:313.34px;line-height:10px;font-family:'Liberation Mono';font-size:7.2px;color:#2aaaff;letter-spacing:0.010px">in</div>
<div class="t" style="left:190.86px;top:313.34px;line-height:10px;font-family:'Liberation Mono';font-size:7.2px;color:#d4d4d4;letter-spacing:0.010px">teger</div>
<div class="t" style="left:380.28px;top:313.94px;line-height:10px;font-family:'Liberation Mono';font-size:6.1px;color:#a8a8a8;letter-spacing:0.000px">integer</div>
<div class="t" style="left:171.4px;top:324.03px;line-height:10px;font-size:5.3px;font-weight:bold;color:#dcdcdc;letter-spacing:-0.3px;-webkit-text-stroke-width:0.25px">abc</div>
<div class="t" style="left:182.20px;top:324.03px;line-height:10px;font-family:'Liberation Mono';font-size:7.2px;color:#2aaaff;letter-spacing:0.010px">IN</div>
<div class="a" style="left:172.0px;top:336.42px;width:6.8px;height:6.8px;border:0.9px solid #b8b8b8;border-radius:0.5px"></div>
<div class="t" style="left:182.20px;top:334.72px;line-height:10px;font-family:'Liberation Mono';font-size:7.2px;color:#2aaaff;letter-spacing:0.010px">i</div>
<div class="t" style="left:186.53px;top:334.72px;line-height:10px;font-family:'Liberation Mono';font-size:7.2px;color:#d4d4d4;letter-spacing:0.010px">f</div>
<div class="t" style="left:190.86px;top:334.72px;line-height:10px;font-family:'Liberation Mono';font-size:7.2px;color:#2aaaff;letter-spacing:0.010px">n</div>
<div class="t" style="left:195.19px;top:334.72px;line-height:10px;font-family:'Liberation Mono';font-size:7.2px;color:#d4d4d4;letter-spacing:0.010px">def</div>
<div class="t" style="left:383.94px;top:335.32px;line-height:10px;font-family:'Liberation Mono';font-size:6.1px;color:#a8a8a8;letter-spacing:0.000px">ifndef</div>
<svg style="left:8.7px;top:391.2px" width="7.5" height="7.5" viewBox="0 0 7.5 7.5"><circle cx="3.75" cy="3.75" r="3.3" stroke="#ffffff" stroke-width="0.85" fill="none"/><path d="M2.3 2.3 L5.2 5.2 M5.2 2.3 L2.3 5.2" stroke="#ffffff" stroke-width="0.8"/></svg>
<div class="t" style="left:18.00px;top:390.40px;font-size:6.4px;line-height:10px;color:#ffffff;font-weight:normal;letter-spacing:0px;font-family:'Liberation Sans';">0</div>
<svg style="left:24px;top:391.2px" width="7.5" height="7" viewBox="0 0 7.5 7"><path d="M3.75 0.5 L7 6.5 H0.5 Z" stroke="#ffffff" stroke-width="0.85" fill="none" stroke-linejoin="round"/><path d="M3.75 2.6 V4.6 M3.75 5.2 V5.8" stroke="#ffffff" stroke-width="0.8"/></svg>
<div class="t" style="left:33.00px;top:390.40px;font-size:6.4px;line-height:10px;color:#ffffff;font-weight:normal;letter-spacing:0px;font-family:'Liberation Sans';">0</div>
<div class="t" style="left:364.60px;top:390.80px;font-size:6.4px;line-height:10px;color:#ffffff;font-weight:normal;letter-spacing:0px;font-family:'Liberation Sans';-webkit-text-stroke-width:0.3px">Ln 25, Col 3</div>
<div class="t" style="left:408.40px;top:390.80px;font-size:6.4px;line-height:10px;color:#ffffff;font-weight:normal;letter-spacing:0px;font-family:'Liberation Sans';-webkit-text-stroke-width:0.3px">Spaces: 4</div>
<div class="t" style="left:444.70px;top:390.80px;font-size:6.4px;line-height:10px;color:#ffffff;font-weight:normal;letter-spacing:0px;font-family:'Liberation Sans';-webkit-text-stroke-width:0.3px">UTF-8</div>
<div class="t" style="left:471.40px;top:390.80px;font-size:6.4px;line-height:10px;color:#ffffff;font-weight:normal;letter-spacing:0px;font-family:'Liberation Sans';-webkit-text-stroke-width:0.3px">CRLF</div>
<div class="t" style="left:495.00px;top:390.80px;font-size:6.4px;line-height:10px;color:#ffffff;font-weight:normal;letter-spacing:0px;font-family:'Liberation Sans';-webkit-text-stroke-width:0.3px">Verilog</div>
<div class="t" style="left:534.80px;top:390.80px;font-size:6.4px;line-height:10px;color:#ffffff;font-weight:normal;letter-spacing:0px;font-family:'Liberation Sans';-webkit-text-stroke-width:0.3px">Go Live</div>
<div class="t" style="left:575.30px;top:390.80px;font-size:6.4px;line-height:10px;color:#ffffff;font-weight:normal;letter-spacing:0px;font-family:'Liberation Sans';-webkit-text-stroke-width:0.3px">Prettier</div>
<svg style="left:526.2px;top:391.2px" width="7.4" height="8" viewBox="0 0 7.4 8"><path d="M1.3 5.6 C-0.4 3.9 0.3 0.4 3.7 0.4 C7.1 0.4 7.8 3.9 6.1 5.6" stroke="#ffffff" stroke-width="0.9" fill="none"/><path d="M2.4 4.6 C1.6 3.6 2.2 1.9 3.7 1.9 C5.2 1.9 5.8 3.6 5 4.6" stroke="#ffffff" stroke-width="0.9" fill="none"/><circle cx="3.7" cy="3.5" r="0.9" fill="#ffffff"/><path d="M3.7 4.2 V7.8" stroke="#ffffff" stroke-width="1"/></svg>
<svg style="left:566.1px;top:391.6px" width="7" height="7" viewBox="0 0 7 7"><circle cx="3.5" cy="3.5" r="3" stroke="#ffffff" stroke-width="0.85" fill="none"/><path d="M1.4 5.6 L5.6 1.4" stroke="#ffffff" stroke-width="0.85"/></svg>
<svg style="left:606.7px;top:391.1px" width="8.6" height="7.4" viewBox="0 0 8.6 7.4"><path d="M4.2 2.6 V0.5 H8.1 V3.6 H6.2 L5.2 4.6" stroke="#ffffff" stroke-width="0.8" fill="none" stroke-linejoin="round"/><circle cx="2.9" cy="3.4" r="1.3" stroke="#ffffff" stroke-width="0.8" fill="none"/><path d="M0.5 7.2 C0.8 5.2 5 5.2 5.3 7.2" stroke="#ffffff" stroke-width="0.8" fill="none"/></svg>
<svg style="left:624px;top:391.4px" width="6.5" height="7.5" viewBox="0 0 6.5 7.5"><path d="M0.5 5.6 H6 L5.2 4.6 V2.9 C5.2 0.2 1.3 0.2 1.3 2.9 V4.6 Z" stroke="#ffffff" stroke-width="0.8" fill="none" stroke-linejoin="round"/><path d="M2.4 6.6 C2.6 7.3 3.9 7.3 4.1 6.6" stroke="#ffffff" stroke-width="0.7" fill="none"/></svg>
<svg style="left:7px;top:406.8px" width="8" height="7.6" viewBox="0 0 8 7.6"><path d="M0 1.1 L3.3 0.65 V3.55 H0 Z M3.8 0.58 L8 0 V3.55 H3.8 Z M0 4.05 H3.3 V6.95 L0 6.5 Z M3.8 4.05 H8 V7.6 L3.8 7.02 Z" fill="#ffffff"/></svg>
<svg style="left:30.5px;top:406.3px" width="7" height="7.5" viewBox="0 0 7 7.5"><circle cx="4.4" cy="2.7" r="2.2" stroke="#ffffff" stroke-width="0.85" fill="none"/><path d="M2.8 4.3 L0.4 7.1" stroke="#ffffff" stroke-width="0.95"/></svg>
<svg style="left:52.4px;top:406.8px" width="7.4" height="7.4" viewBox="0 0 7.4 7.4"><circle cx="3.7" cy="3.7" r="3.1" stroke="#ffffff" stroke-width="1.1" fill="none"/></svg>
<svg style="left:74.2px;top:406.8px" width="8" height="7.5" viewBox="0 0 8 7.5"><rect x="2" y="1.3" width="4" height="4.9" stroke="#ffffff" stroke-width="0.85" fill="none"/><path d="M0.45 0.8 V6.7 M7.55 0.8 V6.7 M2.8 3.1 H5.2 M2.8 4.5 H5.2" stroke="#ffffff" stroke-width="0.85"/></svg>
<div class="a" style="left:92.80px;top:406.80px;width:1.80px;height:7.40px;background:#3a3a3a;"></div>
<div class="a" style="left:106.20px;top:405.40px;width:11.80px;height:10.20px;background:#474747;border-radius:1px"></div>
<svg style="left:108.8px;top:406.4px" width="6.6" height="8.2" viewBox="0 0 6.6 8.2"><path d="M0.2 2.1 L6.4 0.1 V2.1 L0.2 4.1 Z" fill="#ffa000"/><path d="M0.2 2.1 L6.4 4.1 V6.1 L0.2 4.1 Z" fill="#e08800"/><path d="M0.2 6.1 L6.4 4.1 V6.1 L0.2 8.1 Z" fill="#ffa000"/></svg>
<svg style="left:128.8px;top:405.2px" width="11.2" height="10.8" viewBox="0 0 11.2 10.8"><path d="M3.3 2.8 C3.3 0 7.9 0 7.9 2.8" stroke="#f2f2f2" stroke-width="0.9" fill="none"/><rect x="0.3" y="2.6" width="10.6" height="8" fill="#f2f2f2"/><rect x="3.6" y="4.3" width="1.8" height="1.8" fill="#f25022"/><rect x="5.8" y="4.3" width="1.8" height="1.8" fill="#7fba00"/><rect x="3.6" y="6.5" width="1.8" height="1.8" fill="#00a4ef"/><rect x="5.8" y="6.5" width="1.8" height="1.8" fill="#ffb900"/></svg>
<div class="a" style="left:125.00px;top:418.80px;width:19.50px;height:0.90px;background:#b8d0e8;"></div>
<svg style="left:152.5px;top:405.7px" width="11.3" height="9.6" viewBox="0 0 11.3 9.6"><path d="M0 0.5 H4 L5 1.6 H11.3 V9.6 H0 Z" fill="#e8b548"/><rect x="0" y="3" width="11.3" height="6.6" fill="#f8d775"/><rect x="0" y="5.2" width="11.3" height="1.3" fill="#3a8fd6"/></svg>
<svg style="left:174.6px;top:404.6px" width="12.6" height="12.6" viewBox="0 0 20 20"><circle cx="10" cy="10" r="9.6" fill="#db4437"/><path d="M10 10 L1.7 5.2 A9.6 9.6 0 0 0 10 19.6 Z" fill="#0f9d58"/><path d="M10 10 L18.3 5.2 A9.6 9.6 0 0 1 10 19.6 Z" fill="#f4b400"/><path d="M10 10 L10 19.6 A9.6 9.6 0 0 1 5.2 18.3 L10 10 Z" fill="#0f9d58"/><circle cx="10" cy="10" r="4.6" fill="#ffffff"/><circle cx="10" cy="10" r="3.6" fill="#4285f4"/></svg>
<svg style="left:197.5px;top:404.8px" width="12.5" height="12.5" viewBox="0 0 20 20"><circle cx="10" cy="10" r="9" fill="#2a2a2a" stroke="#d8d8d8" stroke-width="1.4"/><path d="M5 7 L10 10 L13 5" stroke="#d8d8d8" stroke-width="1.6" fill="none"/><circle cx="15.5" cy="15" r="4.3" fill="#e81123"/></svg>
<div class="a" style="left:193.80px;top:418.80px;width:19.20px;height:0.90px;background:#b8d0e8;"></div>
<div class="a" style="left:215.00px;top:401.20px;width:23.00px;height:18.80px;background:#3b3b3b;"></div>
<svg style="left:221px;top:405.1px" width="11.5" height="11.2" viewBox="0 0 100 100"><path d="M96.5 10.8 L75.9 0.9 A6.2 6.2 0 0 0 68.8 2.1 L29.4 38 L12.2 25 A4.2 4.2 0 0 0 6.9 25.2 L1.4 30.2 A4.2 4.2 0 0 0 1.4 36.4 L16.3 50 L1.4 63.6 A4.2 4.2 0 0 0 1.4 69.8 L6.9 74.8 A4.2 4.2 0 0 0 12.2 75 L29.4 62 L68.8 97.9 A6.2 6.2 0 0 0 75.9 99.1 L96.5 89.2 A6.2 6.2 0 0 0 100 83.6 V16.4 A6.2 6.2 0 0 0 96.5 10.8 Z M75 72.7 L45.1 50 L75 27.3 Z" fill="#35a8ee" fill-rule="evenodd"/></svg>
<div class="a" style="left:215.00px;top:418.80px;width:23.00px;height:0.90px;background:#c4d8ec;"></div>
<div class="a" style="left:439.40px;top:407.00px;width:2.30px;height:7.00px;background:#3a3a3a;"></div>
<svg style="left:447.5px;top:405.8px" width="4.6" height="10.4" viewBox="0 0 4.6 10.4"><path d="M2.3 0 L4.6 3.3 H0 Z M0 6.9 H4.6 L2.3 10.4 Z" fill="#ffffff"/></svg>
<div class="t" style="left:468.00px;top:402.20px;font-size:5.6px;line-height:10px;color:#ffffff;font-weight:bold;letter-spacing:0px;font-family:'Liberation Sans';">0.00 kB/s</div>
<div class="t" style="left:468.00px;top:409.50px;font-size:5.6px;line-height:10px;color:#ffffff;font-weight:bold;letter-spacing:0px;font-family:'Liberation Sans';">0.00 kB/s</div>
<svg style="left:497px;top:408px" width="6" height="4" viewBox="0 0 6 4"><path d="M0.4 3.5 L3 0.8 L5.6 3.5" stroke="#ffffff" stroke-width="0.85" fill="none"/></svg>
<svg style="left:508px;top:405.8px" width="6.5" height="10" viewBox="0 0 6.5 10"><rect x="1.5" y="0" width="3.5" height="4.5" fill="#eeeeee"/><path d="M0.3 4 H6.2 L5 7 H1.5 Z" fill="#eeeeee"/><path d="M3.25 7 V10" stroke="#eeeeee" stroke-width="1"/></svg>
<svg style="left:518.3px;top:407.6px" width="9" height="6" viewBox="0 0 9 6"><rect x="0.4" y="0.8" width="7.6" height="4.6" stroke="#ffffff" stroke-width="0.8" fill="none"/><rect x="1.3" y="1.7" width="4" height="2.8" fill="#ffffff"/><rect x="8" y="2.2" width="0.8" height="1.8" fill="#ffffff"/></svg>
<svg style="left:530.3px;top:406.5px" width="7" height="7.5" viewBox="0 0 7 7.5"><path d="M0.3 7.2 L6.8 0.6 V7.2 Z" fill="#777777"/><path d="M2.3 7.2 L6.8 2.8 V7.2 Z" fill="#aaaaaa"/></svg>
<svg style="left:540.6px;top:406.5px" width="8.6" height="8" viewBox="0 0 8.6 8"><path d="M0.3 2.6 H2 L4.3 0.6 V7.4 L2 5.4 H0.3 Z" stroke="#ffffff" stroke-width="0.8" fill="none" stroke-linejoin="round"/><path d="M5.6 2.6 C6.4 3.4 6.4 4.6 5.6 5.4 M6.8 1.4 C8.1 2.8 8.1 5.2 6.8 6.6" stroke="#ffffff" stroke-width="0.75" fill="none"/></svg>
<svg style="left:553.8px;top:406.2px" width="8" height="8.5" viewBox="0 0 8 8.5"><path d="M1.2 7.4 L3 5.6 M5 2.8 L6.8 1" stroke="#ffffff" stroke-width="0.9"/><rect x="0.6" y="3.8" width="3.6" height="3" rx="1" transform="rotate(-45 2.4 5.3)" stroke="#ffffff" stroke-width="0.85" fill="none"/><rect x="3.8" y="1.5" width="3.6" height="3" rx="1" transform="rotate(-45 5.6 3)" stroke="#ffffff" stroke-width="0.85" fill="none"/></svg>
<div class="t" style="left:568.20px;top:405.80px;font-size:5.0px;line-height:10px;color:#ffffff;font-weight:normal;letter-spacing:0px;font-family:'Liberation Sans';">ENG</div>
<div class="t" style="left:587.00px;top:401.80px;font-size:5.45px;line-height:10px;color:#ffffff;font-weight:normal;letter-spacing:0px;font-family:'Liberation Sans';">01:30 AM</div>
<div class="t" style="left:585.10px;top:409.20px;font-size:5.35px;line-height:10px;color:#ffffff;font-weight:normal;letter-spacing:0px;font-family:'Liberation Sans';">15-12-2022</div>
<svg style="left:620.6px;top:406.6px" width="12" height="11" viewBox="0 0 12 11"><path d="M0 0 H8.4 V6.2 H3.2 L1.6 7.6 V6.2 H0 Z" fill="#f4f4f4"/><path d="M1.6 1.9 H6.8 M1.6 4.2 H5" stroke="#555555" stroke-width="0.7"/><circle cx="7.6" cy="7.4" r="3.2" fill="#1d1d1d" stroke="#9a9a9a" stroke-width="0.6"/><path d="M8.2 5.6 L6.2 8.2 H8.8 M8.1 6.2 V9.4" stroke="#ffffff" stroke-width="0.8" fill="none"/></svg>
<div class="a" style="left:637.00px;top:401.20px;width:0.80px;height:18.80px;background:#4a4a4a;"></div>
</div></body></html>
